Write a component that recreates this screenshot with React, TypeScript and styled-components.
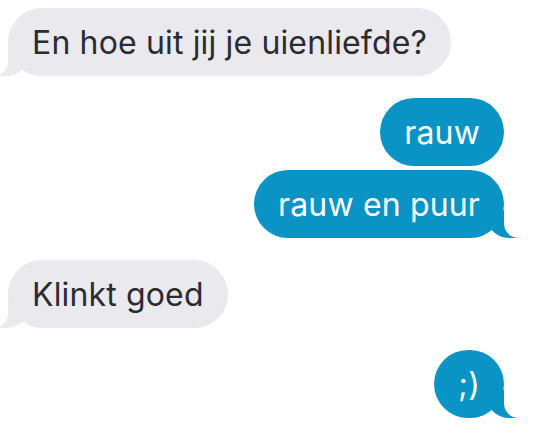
import * as React from 'react'
import styled, { createGlobalStyle, css } from 'styled-components'

const GlobalStyle = createGlobalStyle`
html, body {
  margin: 0;
  padding: 0;
  background: #fff;
}
`

const Thread = styled.div`
display: flex;
flex-direction: column;
padding: 8px 32px 0 8px;
font-family: Inter, "Liberation Sans", Arial, sans-serif;
`

type BubbleProps = { $mine?: boolean; $tail?: boolean; $gap: number }

const Bubble = styled.div<BubbleProps>`
position: relative;
align-self: ${p => (p.$mine ? 'flex-end' : 'flex-start')};
margin-top: ${p => p.$gap}px;
box-sizing: border-box;
min-width: 68px;
height: 68px;
padding: 0 24px;
display: flex;
align-items: center;
justify-content: center;
border-radius: 34px;
font-size: 32px;
letter-spacing: 0.15px;
white-space: nowrap;
background: ${p => (p.$mine ? '#0a94c5' : '#e9e9ee')};
color: ${p => (p.$mine ? '#fff' : '#2c2c30')};

${p => p.$tail && css`
  &::before,
  &::after {
    content: "";
    position: absolute;
    bottom: 0;
    height: 28px;
  }
  &::before {
    width: 28px;
    background: ${p.$mine ? '#0a94c5' : '#e9e9ee'};
    ${p.$mine
      ? css`right: -12px; border-bottom-left-radius: 22px 18px;`
      : css`left: -9px; border-bottom-right-radius: 22px 18px;`}
  }
  &::after {
    width: 16px;
    background: #fff;
    ${p.$mine
      ? css`right: -16px; border-bottom-left-radius: 14px 15px;`
      : css`left: -16px; border-bottom-right-radius: 14px 15px;`}
  }
`}
`

const Text = styled.span`
position: relative;
z-index: 1;
`

const messages = [
  { text: 'En hoe uit jij je uienliefde?', mine: false, tail: true, gap: 0 },
  { text: 'rauw', mine: true, tail: false, gap: 22 },
  { text: 'rauw en puur', mine: true, tail: true, gap: 4 },
  { text: 'Klinkt goed', mine: false, tail: true, gap: 22 },
  { text: ';)', mine: true, tail: true, gap: 22 },
]

export default function App() {
  return (
    <>
      <GlobalStyle />
      <Thread>
        {messages.map((m, i) => (
          <Bubble key={i} $mine={m.mine} $tail={m.tail} $gap={m.gap}>
            <Text>{m.text}</Text>
          </Bubble>
        ))}
      </Thread>
    </>
  )
}
